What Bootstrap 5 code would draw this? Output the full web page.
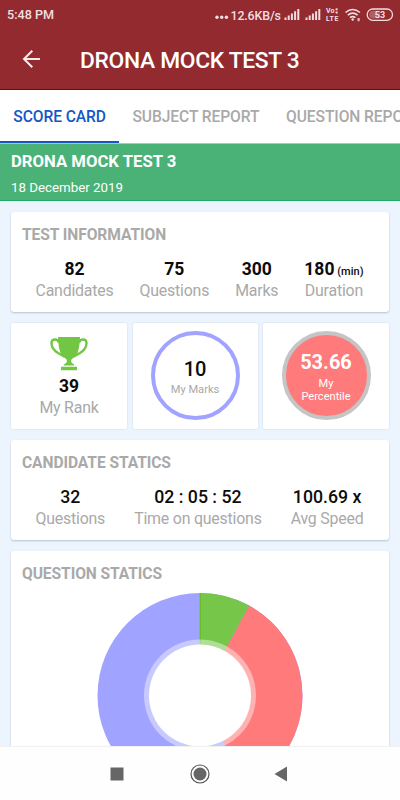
<!DOCTYPE html>
<html lang="en">
<head>
<meta charset="utf-8">
<meta name="viewport" content="width=device-width, initial-scale=1">
<title>Drona Mock Test 3</title>
<link href="https://cdn.jsdelivr.net/npm/bootstrap@5.3.0/dist/css/bootstrap.min.css" rel="stylesheet">
<style>
body { font-family: Roboto, sans-serif; background: #ecf5fd; color: #0c0c0c; line-height: 1; }
.screen { width: 400px; height: 800px; }
.appbar { background: #922a30; height: 90px; border-bottom: 1px solid #7a060d; color: #fff; }
.statusbar { height: 28px; padding: 1px 6px 0 7px; color: #f1dfe0; font-size: 12.6px; font-weight: 500; }
.clock { padding-top: 2px; }
.titlebar { height: 62px; padding: 0 0 0 20px; }
.page-title { font-size: 22.8px; font-weight: 500; margin-left: 36px; padding-top: 4px; white-space: nowrap; letter-spacing: -.32px; }
.tabs { height: 53px; font-size: 15.6px; white-space: nowrap; letter-spacing: -.08px; }
.tabs a { color: #a9a9a9; text-decoration: none; padding: 4px 13.3px 0; border-bottom: 2px solid transparent; height: 53px; font-weight: 500; }
.tabs a.active { color: #1358c4; border-color: #1358c4; }
.banner { background: #4ab177; height: 58px; border-top: 1px solid #9ad3b2; border-bottom: 1px solid #26a962; padding: 8.500px 11px; color: #fff; }
.banner h2 { font-size: 16.7px; font-weight: 700; line-height: 18px; margin: 0 0 9px; }
.banner p { font-size: 13.3px; line-height: 16px; }
.content { padding: 11px 11px 0; gap: 11px; }
.panel { background: #fff; border-radius: 3px; box-shadow: 0 1px 2px rgba(70,90,110,.32); padding: 14px 11px 0; }
.panel h3 { font-size: 15.6px; font-weight: 700; color: #a9a9a9; line-height: 18px; margin: 0; letter-spacing: -.08px; }
.stats { padding: 0 14.5px 0 13.5px; margin-top: 15px; }
.value { font-size: 17.5px; font-weight: 700; line-height: 20px; height: 20px; white-space: nowrap; }
.value-md { font-weight: 500; font-size: 17.7px; }
.value .unit { font-size: 11px; font-weight: 500; line-height: 1; margin-left: -1.500px; }
.label { font-size: 15.9px; letter-spacing: -.2px; color: #a9a9a9; line-height: 20px; margin-top: 2px; white-space: nowrap; }
.info { height: 100px; flex: none; }
.tiles { height: 106px; flex: none; }
.tile { background: #fff; border-radius: 2px; box-shadow: 0 0 2px rgba(70,90,110,.2); }
.tile-a { width: 116px; } .tile-b { width: 125px; } .tile-c { width: 126px; }
.trophy { margin: 14px 0 5px; }
.ring { width: 89px; height: 89px; border-radius: 50%; border: 4px solid #a0a3ff; margin-bottom: 1px; }
.ring-line .tiny { color: #a9a9a9; margin-top: 3px; }
.ring-line { padding-top: 4px; }
.ring-fill { border: 4px solid #c5c5c5; background: #ff7a7a; color: #fff; padding-top: 3px; }
.ring-fill .tiny { margin-top: 4px; }
.ring .big { font-size: 20px; font-weight: 700; line-height: 22px; }
.ring-line .big { font-weight: 500; }
.ring .tiny { font-size: 11.1px; line-height: 13.2px; }
.navkeys { height: 54px; background: #fefefe; border-top: 1px solid #f1f1f1; padding: 0 112px 0 110px; margin-top: auto; flex: none; }
.home-key { margin-left: 1px; }
</style>
<script src="https://cdn.jsdelivr.net/npm/bootstrap@5.3.0/dist/js/bootstrap.bundle.min.js"></script>
</head>
<body>
<div class="screen d-flex flex-column overflow-hidden">
  <header class="appbar flex-shrink-0">
    <div class="statusbar d-flex align-items-center justify-content-between">
      <span class="clock">5:48 PM</span>
      <svg width="184" height="24" viewBox="210 2 184 24" fill="#f1dfe0">
        <circle cx="217" cy="16.300" r="1.700"/><circle cx="221.700" cy="16.300" r="1.700"/><circle cx="226.400" cy="16.300" r="1.700"/>
        <text x="230.500" y="18.500" font-size="12.400" font-weight="500" textLength="50.500">12.6KB/s</text>
        <g id="signal"><path d="M284.500 16.500h2v2.500h-2zM287.700 14.500h2v4.500h-2zM290.900 12.500h2v6.500h-2zM294.100 10.300h2v8.700h-2zM297.300 8h2v11h-2z"/></g>
        <use href="#signal" x="21"/>
        <text x="326" y="12.300" font-size="7" font-weight="700" textLength="8.500">Vo</text>
        <path d="M335.500 7.800l2-.8v2.600l-2-.5zM335.500 10.800l2-.5v2.600l-2-.8z"/>
        <text x="326" y="19.900" font-size="7" font-weight="700" textLength="12.500">LTE</text>
        <g fill="none" stroke="#f1dfe0" stroke-width="1.600"><path d="M345.500 11.500q7.200-6 14.400 0M347.800 14.200q4.900-4 9.800 0M350 16.700q2.700-2.200 5.400 0"/></g>
        <circle cx="352.700" cy="18.500" r="1.200"/><path d="M357.500 17h2.200v3.200h-2.200z" opacity=".8"/>
        <rect x="367.200" y="8" width="25.300" height="11.300" rx="5.650" fill="none" stroke="#f1dfe0" stroke-width="1.300"/>
        <path d="M373 9.800h7v7.700h-7a3.850 3.850 0 0 1 0-7.700z" opacity=".3"/>
        <text x="374.700" y="17" font-size="9" font-weight="700" textLength="10.500">53</text>
      </svg>
    </div>
    <div class="titlebar d-flex align-items-center">
      <svg width="24" height="24" viewBox="0 0 24 24" fill="none" stroke="#f7e9ea" stroke-width="2"><path d="M20 12H4M12.300 3.700L4 12l8.300 8.300"/></svg>
      <h1 class="page-title mb-0">DRONA MOCK TEST 3</h1>
    </div>
  </header>
  <nav class="tabs bg-white d-flex flex-shrink-0">
    <a class="active d-flex align-items-center" href="#">SCORE CARD</a>
    <a class="d-flex align-items-center" href="#">SUBJECT REPORT</a>
    <a class="d-flex align-items-center" href="#">QUESTION REPORT</a>
  </nav>
  <section class="banner flex-shrink-0">
    <h2>DRONA MOCK TEST 3</h2>
    <p class="mb-0">18 December 2019</p>
  </section>
  <main class="content d-flex flex-column flex-grow-1 overflow-hidden">
    <section class="panel info">
      <h3>TEST INFORMATION</h3>
      <div class="stats d-flex justify-content-between text-center">
        <div><div class="value">82</div><div class="label">Candidates</div></div>
        <div><div class="value">75</div><div class="label">Questions</div></div>
        <div><div class="value">300</div><div class="label">Marks</div></div>
        <div><div class="value">180 <span class="unit">(min)</span></div><div class="label">Duration</div></div>
      </div>
    </section>
    <section class="tiles d-flex justify-content-between">
      <div class="tile tile-a d-flex flex-column align-items-center">
        <svg class="trophy flex-shrink-0" width="38" height="34" viewBox="0 0 38 34"><path fill="#71c644" d="M8 0h22q-.3 10-2.300 15.500-1.200 3.300-4 5-2.700 1.700-2.700 3.500 0 2 3.300 3.500v1H13.700v-1Q17 26 17 24q0-1.800-2.700-3.500-2.800-1.700-4-5Q8.300 10 8 0zM11 29.800h16v3.400H11z"/><path fill="none" stroke="#71c644" stroke-width="2.400" d="M9 5.500Q8 2.500 5 2.500 1.500 2.500 1.500 6q0 6 6.500 10 3.500 2 7 4M29 5.500q1-3 4-3 3.500 0 3.500 3.500 0 6-6.500 10-3.500 2-7 4"/></svg>
        <div class="value">39</div>
        <div class="label">My Rank</div>
      </div>
      <div class="tile tile-b d-flex justify-content-center align-items-center">
        <div class="ring ring-line d-flex flex-column justify-content-center align-items-center">
          <div class="big">10</div><div class="tiny">My Marks</div>
        </div>
      </div>
      <div class="tile tile-c d-flex justify-content-center align-items-center">
        <div class="ring ring-fill d-flex flex-column justify-content-center align-items-center text-center">
          <div class="big">53.66</div><div class="tiny">My<br>Percentile</div>
        </div>
      </div>
    </section>
    <section class="panel info">
      <h3>CANDIDATE STATICS</h3>
      <div class="stats d-flex justify-content-between text-center">
        <div><div class="value value-md">32</div><div class="label">Questions</div></div>
        <div><div class="value value-md">02 : 05 : 52</div><div class="label">Time on questions</div></div>
        <div><div class="value value-md">100.69 x</div><div class="label">Avg Speed</div></div>
      </div>
    </section>
    <section class="panel flex-shrink-0">
      <h3>QUESTION STATICS</h3>
      <svg class="d-block mx-auto" width="206" height="214" viewBox="-103 -112.500 206 214">
        <circle r="102.500" fill="#a0a3ff"/>
        <path fill="#ff7a7a" d="M0 0L49.200-89.900A102.500 102.500 0 0 1 46.500 91.300z"/>
        <path fill="#76c649" d="M0 0V-102.500A102.500 102.500 0 0 1 49.200-89.900z"/>
        <path stroke="#62bd18" d="M.2 0V-102.300"/>
        <circle r="56" fill="#fff" opacity=".42"/>
        <circle r="51" fill="#fff"/>
      </svg>
    </section>
  </main>
  <footer class="navkeys d-flex justify-content-between align-items-center">
    <svg width="14" height="14"><path fill="#666" d="M.5.500h13v13H.5z"/></svg>
    <svg class="home-key" width="20" height="20" viewBox="0 0 20 20"><circle cx="10" cy="10" r="9" fill="none" stroke="#555" stroke-width="1.200"/><circle cx="10" cy="10" r="6.500" fill="#666"/></svg>
    <svg width="14" height="16" viewBox="0 0 14 16"><path fill="#666" d="M13 .5v15L.5 8z"/></svg>
  </footer>
</div>
</body>
</html>
